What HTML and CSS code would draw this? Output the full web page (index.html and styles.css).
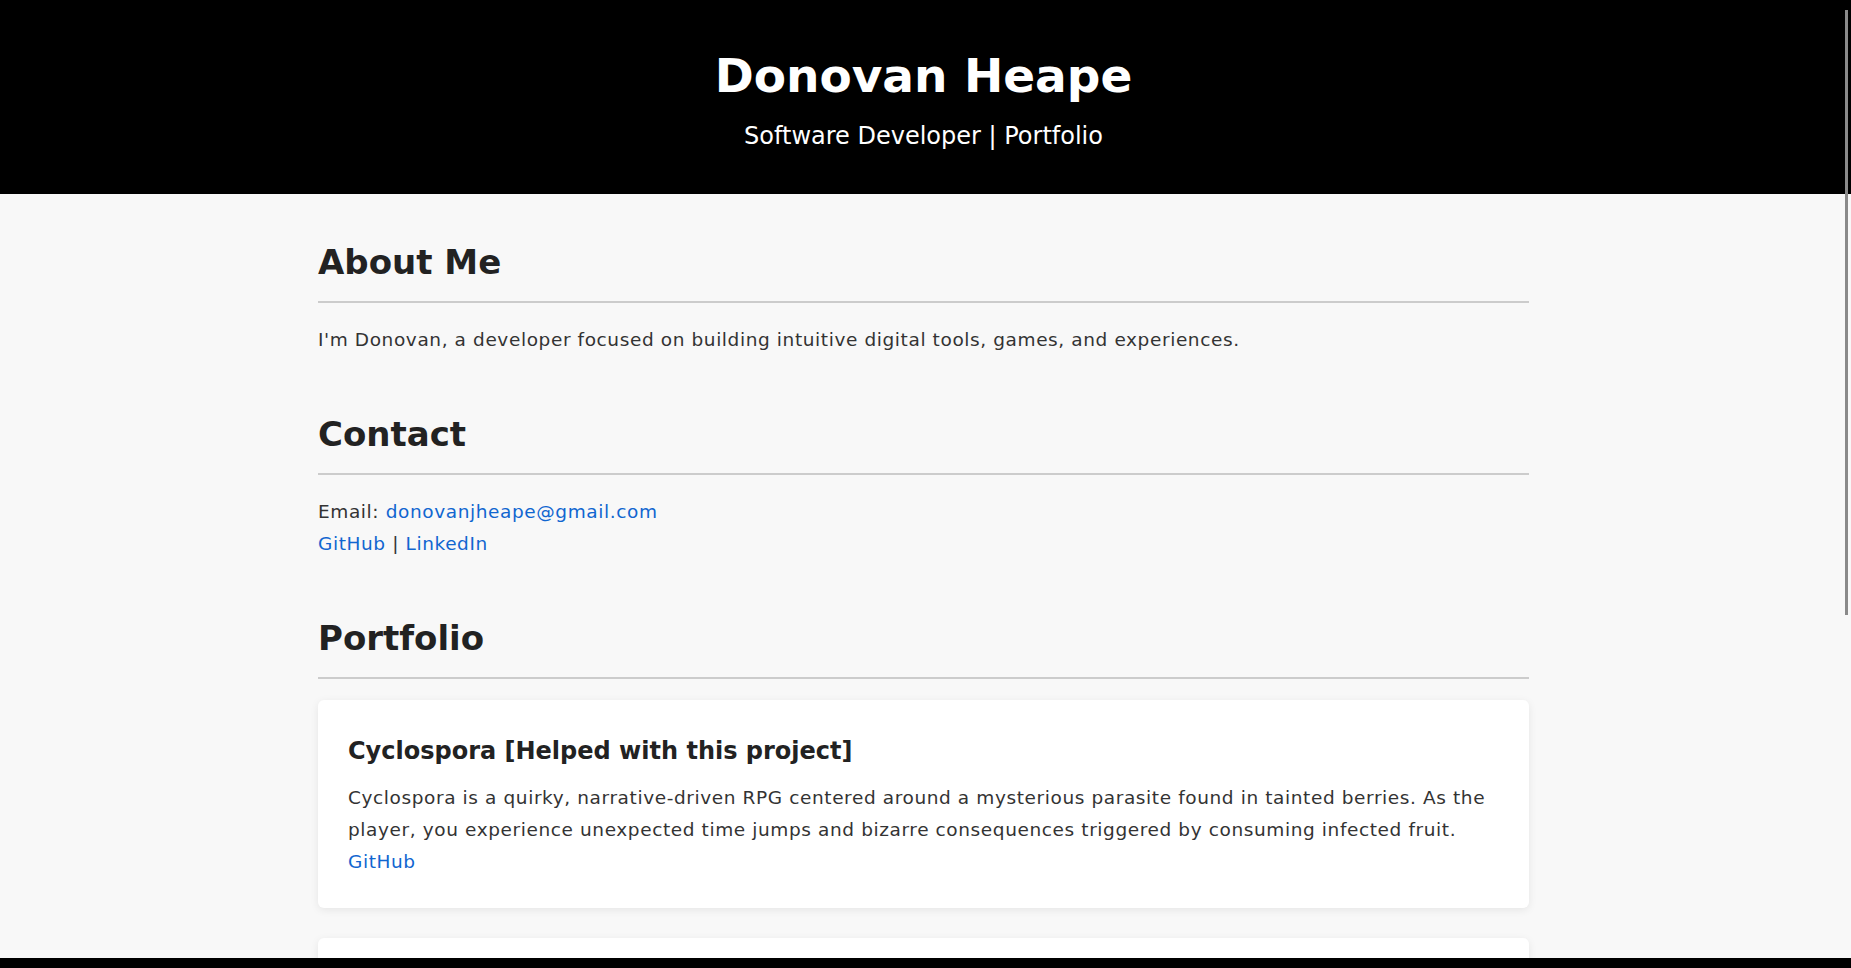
FILE: index.html
```html
<!DOCTYPE html>
<html lang="en">
<head>
<meta charset="utf-8">
<title>Donovan Heape | Portfolio</title>
<link rel="stylesheet" href="styles.css">
</head>
<body>
<header class="site-header">
  <h1 class="site-title">Donovan Heape</h1>
  <p class="site-subtitle">Software Developer | Portfolio</p>
</header>
<main class="page">
  <div class="content">
    <section class="section">
      <h2 class="section-title">About Me</h2>
      <p class="text">I'm Donovan, a developer focused on building intuitive digital tools, games, and experiences.</p>
    </section>
    <section class="section">
      <h2 class="section-title">Contact</h2>
      <p class="text">Email: <a class="link" href="#">donovanjheape@gmail.com</a><br>
      <a class="link" href="#">GitHub</a> | <a class="link" href="#">LinkedIn</a></p>
    </section>
    <section class="section">
      <h2 class="section-title">Portfolio</h2>
      <div class="cards">
        <article class="card">
          <h3 class="card-title">Cyclospora [Helped with this project]</h3>
          <p class="text">Cyclospora is a quirky, narrative-driven RPG centered around a mysterious parasite found in tainted berries. As the player, you experience unexpected time jumps and bizarre consequences triggered by consuming infected fruit.<br>
          <a class="link" href="#">GitHub</a></p>
        </article>
        <article class="card card-empty"></article>
      </div>
    </section>
  </div>
</main>
<div class="scroll-thumb"></div>
<div class="bottom-bar"></div>
</body>
</html>
```

FILE: styles.css
```css
html {
  scrollbar-width: none;
}
html::-webkit-scrollbar {
  display: none;
}
body {
  margin: 0;
  background: #f8f8f8;
  color: #333;
  font-family: "DejaVu Sans", "Open Sans", sans-serif;
}
.site-header {
  background: #000;
  color: #fff;
  height: 194px;
  box-sizing: border-box;
  padding: 46px 4px 0 0;
  display: flex;
  flex-direction: column;
  align-items: center;
}
.site-title {
  margin: 0;
  font-size: 47px;
  line-height: 60px;
  font-weight: 700;
}
.site-subtitle {
  margin: 14px 0 0;
  font-size: 24px;
  line-height: 32px;
}
.page {
  padding-right: 4px;
}
.content {
  max-width: 1211px;
  margin: 0 auto;
  padding: 46px 0 0;
  display: flex;
  flex-direction: column;
  gap: 56px;
}
.section-title {
  margin: 0 0 21px;
  font-size: 34px;
  line-height: 44px;
  font-weight: 700;
  color: #222;
  padding-bottom: 17px;
  border-bottom: 2px solid #ccc;
}
.text {
  margin: 0;
  font-size: 18.5px;
  letter-spacing: 0.6px;
  line-height: 32px;
}
.link {
  color: #1166d0;
  text-decoration: none;
}
.cards {
  display: flex;
  flex-direction: column;
  gap: 30px;
}
.card {
  background: #fff;
  border-radius: 6px;
  padding: 30px;
  box-shadow: 0 2px 8px rgba(0, 0, 0, 0.08);
}
.card-empty {
  height: 200px;
}
.card-title {
  margin: 0 0 10px;
  font-size: 24px;
  line-height: 42px;
  font-weight: 700;
  color: #222;
}
.scroll-thumb {
  position: fixed;
  top: 10px;
  right: 3px;
  width: 3px;
  height: 605px;
  background: #8a8a8a;
}
.bottom-bar {
  position: fixed;
  left: 0;
  right: 0;
  bottom: 0;
  height: 10px;
  background: #000;
}
```
